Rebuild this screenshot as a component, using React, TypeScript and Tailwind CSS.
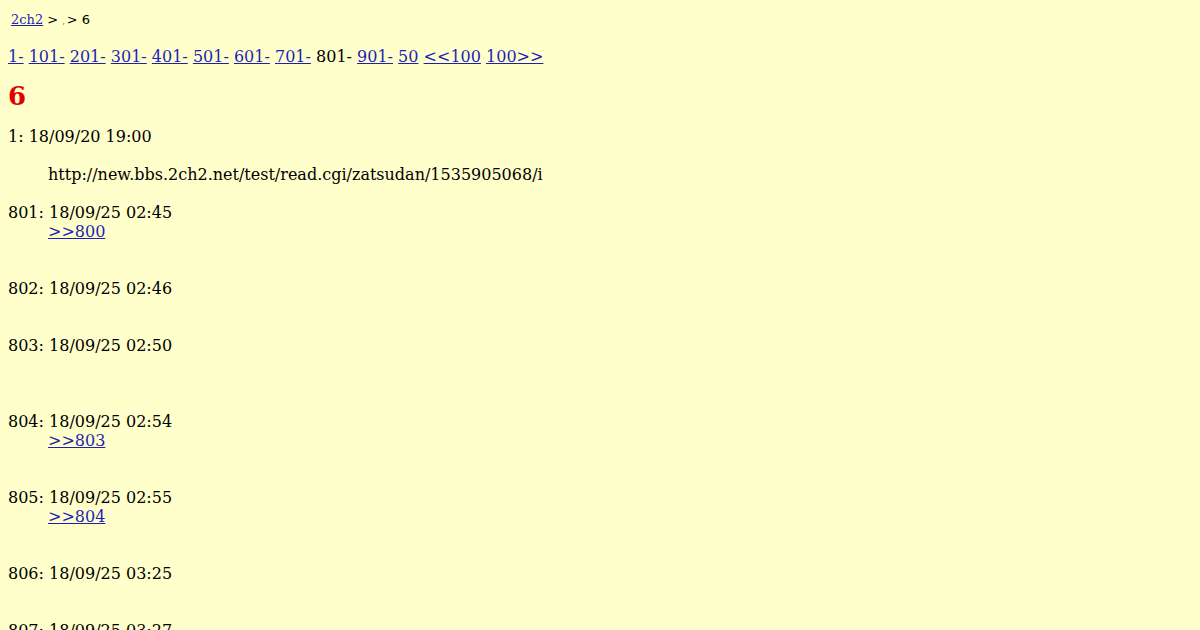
import React from "react";

const L = "text-[#1f1fb4] underline";

function Post({ head, lines }: { head: string; lines: React.ReactNode[] }) {
  return (
    <>
      <dt className="h-[19px]">{head}</dt>
      <dd className="ml-[40px]">
        {lines.map((l, i) => (
          <div key={i} className="h-[19px]">
            {l}
          </div>
        ))}
      </dd>
    </>
  );
}

export default function App() {
  const nav = ["1-", "101-", "201-", "301-", "401-", "501-", "601-", "701-"];
  return (
    <div
      className="min-h-screen bg-[#ffffcc] px-2 pt-[9px] pb-2 text-[16px] leading-[19px] text-black"
      style={{ fontFamily: '"DejaVu Serif", serif' }}
    >
      <div className="h-[22px] pl-[3px] text-[13px] leading-[22px]">
        <a className={L}>2ch2</a>
        <span style={{ fontFamily: '"DejaVu Sans", sans-serif' }}>
          {" "}&gt; <span className="text-[7px]">, </span>&gt; 6
        </span>
      </div>
      <div className="mt-[16px] h-[19px] whitespace-nowrap">
        {nav.map((n) => (
          <React.Fragment key={n}>
            <a className={L}>{n}</a>{" "}
          </React.Fragment>
        ))}
        801-{" "}
        <a className={L}>901-</a> <a className={L}>50</a>{" "}
        <a className={L}>&lt;&lt;100</a> <a className={L}>100&gt;&gt;</a>
      </div>
      <h1 className="mt-[15px] h-[30px] text-[26px] font-bold leading-[30px] text-[#e00000]">6</h1>
      <dl className="mt-[16px]">
        <Post
          head="1: 18/09/20 19:00"
          lines={["", "http://new.bbs.2ch2.net/test/read.cgi/zatsudan/1535905068/i", ""]}
        />
        <Post head="801: 18/09/25 02:45" lines={[<a className={L}>&gt;&gt;800</a>, "", ""]} />
        <Post head="802: 18/09/25 02:46" lines={["", ""]} />
        <Post head="803: 18/09/25 02:50" lines={["", "", ""]} />
        <Post head="804: 18/09/25 02:54" lines={[<a className={L}>&gt;&gt;803</a>, "", ""]} />
        <Post head="805: 18/09/25 02:55" lines={[<a className={L}>&gt;&gt;804</a>, "", ""]} />
        <Post head="806: 18/09/25 03:25" lines={["", ""]} />
        <Post head="807: 18/09/25 03:27" lines={["", ""]} />
      </dl>
    </div>
  );
}
